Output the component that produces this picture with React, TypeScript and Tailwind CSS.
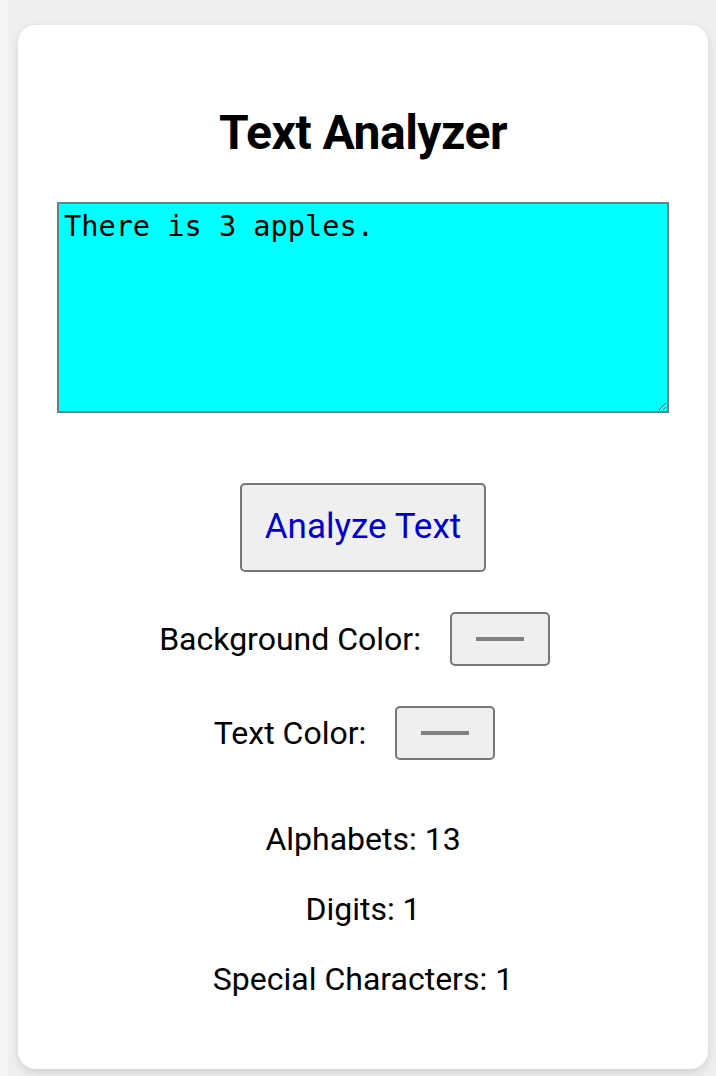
export default function App() {
  return (
    <main className="min-h-[1076px] w-[716px] bg-[#efefef] flex" style={{ fontFamily: "Roboto, 'Noto Sans', sans-serif" }}>
      <div className="w-[8px] bg-[#f5f5f5]" />
      <section className="ml-[10px] mt-[25px] mb-[7px] w-[690px] h-[1044px] bg-white rounded-[18px] shadow-[0_4px_10px_rgba(0,0,0,0.12)] flex flex-col items-center">
        <h1 className="mt-[79px] text-[48px] leading-[58px] font-bold text-black tracking-[-0.5px]">Text Analyzer</h1>

        <textarea
          defaultValue="There is 3 apples."
          className="mt-[40px] w-[612px] h-[211px] border-2 border-[#5f8585] bg-[#00ffff] px-[5px] py-[4px] text-[28.6px] leading-[36px] text-black"
          style={{ fontFamily: "'DejaVu Sans Mono', monospace" }}
        />

        <button className="mt-[70px] w-[246px] h-[89px] border-2 border-[#767676] rounded-[5px] bg-[#efefef] text-[35px] text-[#0000cc]">
          Analyze Text
        </button>

        <ColorRow label="Background Color:" className="mt-[40px]" />
        <ColorRow label="Text Color:" className="mt-[40px]" />

        <div className="mt-[62px] flex flex-col items-center gap-[35px] text-[32px] leading-[35px] text-black">
          <p>Alphabets: 13</p>
          <p>Digits: 1</p>
          <p>Special Characters: 1</p>
        </div>
      </section>
    </main>
  );
}

function ColorRow({ label, className }: { label: string; className: string }) {
  return (
    <div className={`flex items-center gap-[29px] pr-[17px] ${className}`}>
      <span className="text-[32px] leading-[35px] text-black">{label}</span>
      <div className="w-[100px] h-[54px] border-2 border-[#767676] rounded-[5px] bg-[#efefef] flex items-center justify-center">
        <div className="w-[48px] h-[4px] bg-[#808080]" />
      </div>
    </div>
  );
}
